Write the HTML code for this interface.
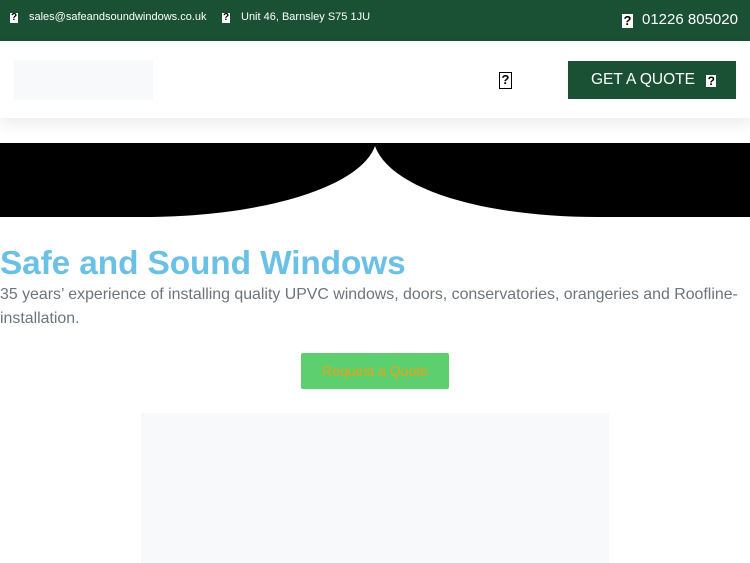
<!DOCTYPE html>
<html><head><meta charset="utf-8"><style>
*{margin:0;padding:0;box-sizing:border-box}
body{width:750px;height:563px;overflow:hidden;background:#fff;font-family:"Liberation Sans",Arial,sans-serif;position:relative}
.top{position:absolute;left:0;top:0;width:750px;height:41px;background:#1a5135;color:#fff;font-size:11px}
.ic{display:inline-block;width:10px;height:12px;background:#fff;border:1px solid #1a5135;color:#000;font-size:10px;line-height:10px;text-align:center;font-weight:bold}
.nav{position:absolute;left:0;top:41px;width:750px;height:77px;background:#fff;box-shadow:0 6px 14px rgba(0,0,0,.08)}
.logo{position:absolute;left:14px;top:19px;width:139px;height:40px;background:#f8f9fa}
.btn{position:absolute;left:568px;top:20px;width:168px;height:38px;background:#1a5135;color:#fff;font-size:15.5px;line-height:38px;padding-left:23px}
h1{position:absolute;left:0;top:245px;font-size:33.4px;color:#6bc1e5;font-weight:bold;letter-spacing:-0.1px}
p{position:absolute;left:0;top:283px;width:750px;font-size:15.9px;line-height:24px;color:#6c757d}
.rq{position:absolute;left:301px;top:353px;width:148px;height:36px;background:#5ecf6e;color:#e8a317;font-size:14px;line-height:36px;text-align:center;border-radius:2px}
.box{position:absolute;left:141px;top:413px;width:468px;height:150px;background:#f8f9fa}
</style></head><body>
<div class="top">
<span class="ic" style="position:absolute;left:9px;top:12px">?</span><span style="position:absolute;left:29px;top:11px">sales@safeandsoundwindows.co.uk</span>
<span class="ic" style="position:absolute;left:221px;top:12px">?</span><span style="position:absolute;left:241px;top:11px">Unit 46, Barnsley S75 1JU</span>
<span class="ic" style="position:absolute;left:621px;top:13px;width:13px;height:16px;font-size:13px;line-height:14px">?</span><span style="position:absolute;left:642px;top:11px;font-size:15px">01226 805020</span>
</div>
<div class="nav">
<div class="logo"></div>
<span class="ic" style="position:absolute;left:499px;top:31px;width:13px;height:17px;border:1.5px solid #000;font-size:13px;line-height:14px">?</span>
<div class="btn">GET A QUOTE <span class="ic" style="width:12px;height:14px;font-size:12px;line-height:12px;margin-left:6px;vertical-align:-1px">?</span></div>
</div>
<svg style="position:absolute;left:0;top:143px" width="750" height="74" viewBox="0 0 750 74">
<path d="M0 0H750V74H598C480 74 390 45 375 3C360 45 260 74 143 74H0Z" fill="#000"/>
</svg>
<h1>Safe and Sound Windows</h1>
<p>35 years’ experience of installing quality UPVC windows, doors, conservatories, orangeries and Roofline-installation.</p>
<div class="rq">Request a Quote</div>
<div class="box"></div>
</body></html>
